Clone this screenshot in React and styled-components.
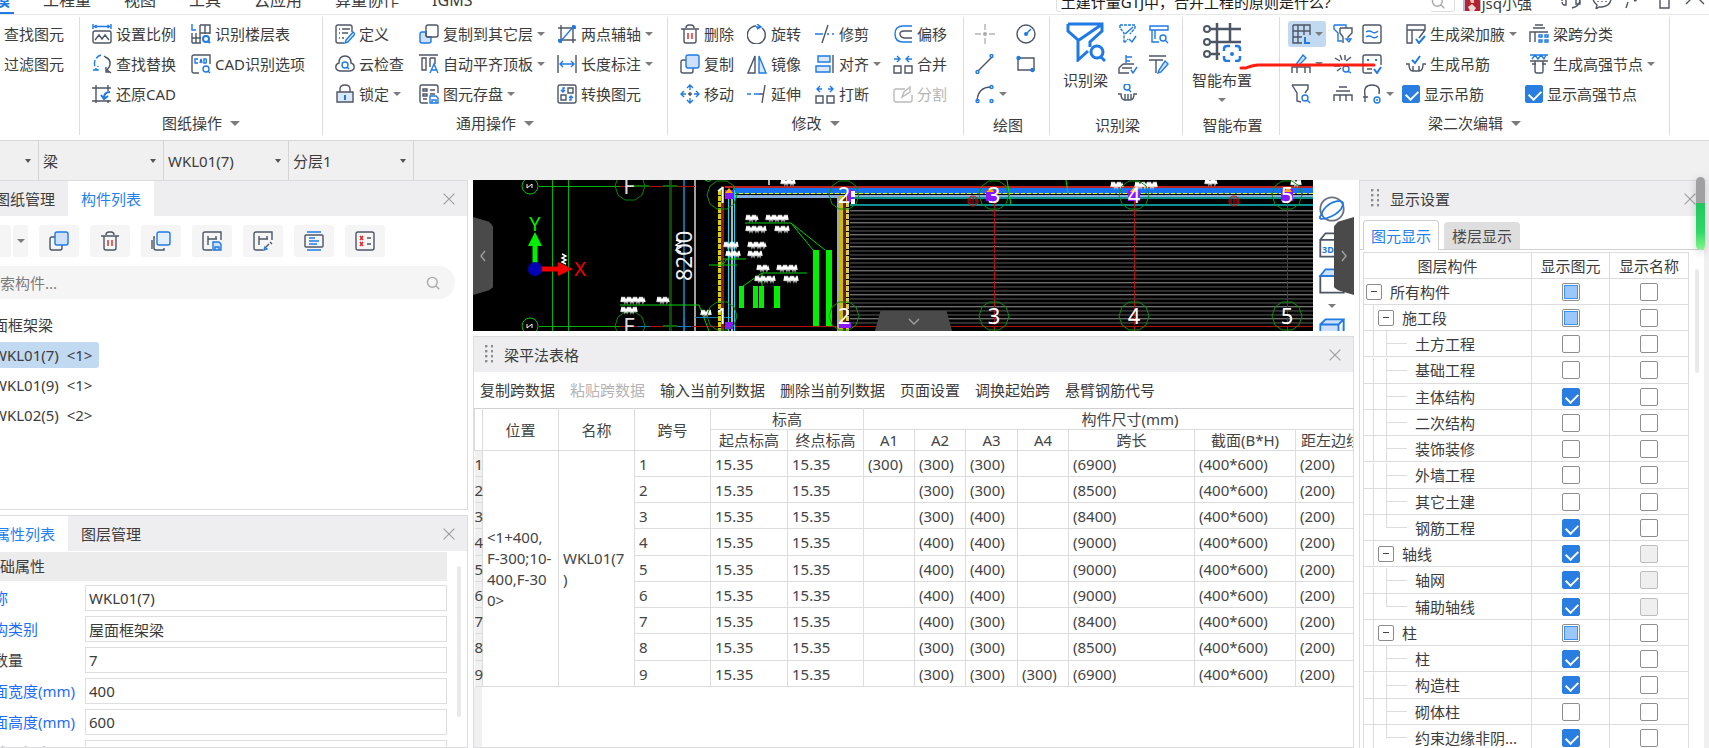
import React, { useEffect, useRef } from "react";
import styled, { createGlobalStyle, css } from "styled-components";

const BLUE = "#1f7ae6";
const INK = "#4d5566";
const LINE = "#dcdcde";

const Global = createGlobalStyle`
  * { box-sizing: border-box; }
  html, body { margin: 0; height: 100%; overflow: hidden; }
  body, button, input, select, table {
    font-family: "Noto Sans", "Noto Sans CJK SC", sans-serif;
    font-size: 15px;
    line-height: 20px;
    color: #3c3c3c;
  }
  button { border: 0; padding: 0; background: none; }
  body { background: #fff; }
`;

/* ---------- icons ---------- */

const k = (d, extra) => <path d={d} stroke={INK} {...extra} />;
const b = (d, extra) => <path d={d} stroke={BLUE} {...extra} />;

const ICONS = {
  scale: <>{b("M1 0v5M19 0v5M2 2.500h16M4.500 1l-2 1.500 2 1.500M15.500 1l2 1.500-2 1.500")}{k("M3 7h14q2 0 2 2v8q0 2-2 2H3q-2 0-2-2V9q0-2 2-2zM3 16l4-5 3 4 3-4 4 5")}</>,
  floors: <>{b("M1 0v6h4")}{k("M9 1h10v9M9 1v18M9 9h10M14 1v9M1 9v10M1 14h9M1 19h9M5 9v10")}{b("M19 19l-2-2M12 15a3 3 0 1 0 6 0 3 3 0 1 0-6 0", { strokeWidth: 2 })}</>,
  replace: <>{b("M9 1a9 9 0 0 0-4 15M1 16h5v-4", { strokeDasharray: "6 2" })}{k("M13 3q6 2 5 8-1 3-3 5l4 3M12 2l3 2M14 13v5h4")}</>,
  cadOpt: <>{k("M8 19H3q-2 0-2-2V3q0-2 2-2h16v9")}{b("M7 5H4v4h3M9 9l1-4 1 4M13 5v4h2q1-2 0-4zM19 19l-2-2M12 15a3 3 0 1 0 6 0 3 3 0 1 0-6 0")}</>,
  restore: <>{k("M4 1v18M16 1v6M16 16v3M0 4h19M0 17h19")}{b("M18 8q-6 0-6 6M9 11l3 4 4-3", { strokeWidth: 2 })}</>,
  define: <>{k("M17 8V3q0-2-2-2H3Q1 1 1 3v14q0 2 2 2h6M4 5h1M4 9h1M4 14h1M7 5h8M7 9h6M7 14h2")}{b("M18 8l2 2-7 8-3 1 1-3z", { fill: "#d5e6fc" })}</>,
  cloud: <>{k("M5 17q-5-1-4-5 0-2 3-3 0-7 6-7t6 7q3 1 3 3 1 4-4 5z")}{b("M7 11a3 3 0 1 0 6 0 3 3 0 1 0-6 0M12 13l2 2")}</>,
  lock: <>{k("M2 8h16v10H2z", { fill: "#dbe8fa" })}{k("M5 8V5q0-4 5-4t5 4v3")}{b("M10 11v5M9 12h2", { strokeWidth: 2 })}</>,
  copyFloor: <>{b("M7 8H3Q1 8 1 10v7q0 2 2 2h7q2 0 2-2v-4H9q-2 0-2-2z", { fill: "#cfe1fa" })}{k("M9 1h8q2 0 2 2v8q0 2-2 2H9q-2 0-2-2V3q0-2 2-2z")}</>,
  alignTop: <>{k("M0 1h19M3 4h4v12H3zM11 4h5v6M11 4v9")}{b("M11 19l4-9 4 9M12 16h6")}</>,
  store: <>{k("M9 19H3q-2 0-2-2V3q0-2 2-2h14q2 0 2 2v6M11 6h5M4 5h4v2H4zM4 10h4v2H4zM4 15h4M11 10h5")}{b("M11 12h6l2 2v5h-8zM13 19v-3h4v3")}</>,
  axis: <>{k("M4 1v18M16 1v18M1 4h18M1 16h18")}{b("M3 18L17 2")}<circle cx="17" cy="3" r="2" fill={BLUE} /><circle cx="3" cy="17" r="2" fill={BLUE} /></>,
  length: <>{k("M1 1v18M19 1v18")}{b("M3 10h14M6 7l-3 3 3 3M14 7l3 3-3 3")}</>,
  convert: <>{k("M3 1h14q2 0 2 2v14q0 2-2 2H3q-2 0-2-2V3q0-2 2-2zM11 4h5v5h-5zM4 11h5v5H4z")}{b("M8 4H6v4M4 6l2 2 2-2M12 16h2v-4M12 14l2-2 2 2")}</>,
  trash: <>{k("M1 5h18M4 5v12q0 2 2 2h8q2 0 2-2V5M6 4q0-3 3-3h2q3 0 3 3")}<path d="M8 9v6M12 9v6" stroke="#e02424" /></>,
  copy: <>{k("M6 6H3Q1 6 1 8v9q0 2 2 2h8q2 0 2-2v-3")}{b("M8 1h9q2 0 2 2v9q0 2-2 2H8q-2 0-2-2V3q0-2 2-2z", { fill: "#cfe1fa" })}</>,
  copyPlain: <>{k("M4 6H3v11q0 2 2 2h8v-2M1 9v9")}{b("M9 1h8q2 0 2 2v9q0 2-2 2H8q-2 0-2-2V3q0-2 2-2z", { fill: "#e3effe" })}</>,
  move: <>{b("M10 1v5M10 14v5M1 10h5M14 10h5M7 4l3-3 3 3M7 16l3 3 3-3M4 7l-3 3 3 3M16 7l3 3-3 3")}{k("M10 8v4M8 10h4")}</>,
  rotate: <>{k("M15 4a9 9 0 1 1-6-2")}{b("M10 0l4 3-4 2M13 3H9")}</>,
  mirror: <>{k("M8 2v17H1z")}{b("M12 2v17h7z", { fill: "#dbe8fa" })}</>,
  extend: <>{b("M0 10h4M7 10h5")}{k("M18 1l-3 18M12 10h4")}</>,
  trim: <>{b("M0 10h8M12 10h2M17 10h2")}{k("M13 1L7 19")}</>,
  align: <>{b("M3 2h12v6H3zM1 12h14v6H1z", { fill: "#dbe8fa" })}{k("M18 1v18")}</>,
  breakUp: <>{k("M1 12h7v7H1zM12 12h7v7h-7z")}{b("M2 5h5M13 5h5M5 2L2 5l3 3M15 2l3 3-3 3")}</>,
  offset: <>{b("M19 2h-9q-8 0-8 8t8 8h9")}{k("M19 7h-8q-4 0-4 3t4 4h8")}</>,
  merge: <>{k("M1 12h7v7H1zM12 12h7v7h-7z")}{b("M1 5h5M14 5h5M4 2l3 3-3 3M16 2l-3 3 3 3")}</>,
  split: <path d="M12 5H3Q1 5 1 7v9q0 2 2 2h14q2 0 2-2v-5M9 13l2-5 6-5v5z" stroke="#bbb" />,
  point: <><path d="M10 0v6M10 14v6M0 10h6M14 10h6" stroke="#b4b4b4" /><circle cx="10" cy="10" r="2" fill="#aaa" /></>,
  circle: <>{k("M1 10a9 9 0 1 0 18 0 9 9 0 1 0-18 0")}{b("M10 10l5-5")}<circle cx="10" cy="10" r="2" fill={BLUE} /></>,
  line: <>{k("M3 17L17 3")}{b("M1 18a1.500 1.500 0 1 0 3 0 1.500 1.500 0 1 0-3 0M15 2a1.500 1.500 0 1 0 3 0 1.500 1.500 0 1 0-3 0")}</>,
  rect: <>{k("M2 4h16v12H2z")}{b("M1 4a1.500 1.500 0 1 0 3 0 1.500 1.500 0 1 0-3 0M15 16a1.500 1.500 0 1 0 3 0 1.500 1.500 0 1 0-3 0", { fill: BLUE })}</>,
  arc: <>{k("M2 17Q3 3 16 3")}{b("M1 17a1.500 1.500 0 1 0 3 0 1.500 1.500 0 1 0-3 0M15 3a1.500 1.500 0 1 0 3 0 1.500 1.500 0 1 0-3 0M15 17a1.500 1.500 0 1 0 3 0 1.500 1.500 0 1 0-3 0")}</>,
  filterEdit: <>{b("M2 1h15v3l-5 6M2 1v3l4 5v10l4-4", { strokeDasharray: "3 1" })}{b("M11 15l3 3 4-6M15 3L7 10")}</>,
  spanSearch: <>{b("M1 2h18v4H1zM3 6v12h7M6 6v9M11 14a3 3 0 1 0 6 0 3 3 0 1 0-6 0M16 16l3 3")}</>,
  checkTray: <>{b("M8 1v8M8 3h6M8 7h4M13 16l2 3 4-6")}{k("M5 10h11M5 10l-4 4v5h10M4 14h10")}</>,
  beamEdit: <>{k("M0 2h17M0 6h14M7 6v13")}{b("M16 7l3 3-7 8-3 1 1-3z", { fill: "#d5e6fc" })}</>,
  basket: <>{b("M6 3a3 3 0 1 0 6 0 3 3 0 1 0-6 0M11 6l2 2")}{k("M0 10h3q0 6 4 6h5q4 0 4-6h3M7 10v6M10 10v6M13 10v6")}</>,
  gridL: <>{k("M2 1h17v10M2 1v18h9M2 7h17M2 13h9M7 1v18M13 1v10")}{b("M14 13v6h5", { strokeWidth: 2 })}</>,
  funnelPair: <>{b("M1 1h12v3M1 1v4l4 4v8h4M13 15h5l-2 3z")}{k("M7 4h12v5l-4 4v1M7 4v5l3 4v6")}</>,
  eqBox: <>{k("M3 1h14q2 0 2 2v14q0 2-2 2H3q-2 0-2-2V3q0-2 2-2z")}{b("M4 8q3-2 6 0t6-1M4 13q3-2 6 0t6-1")}</>,
  pencilBeam: <>{b("M12 1l3 3-7 7-3 1 1-3z", { fill: "#d5e6fc" })}{k("M1 19v-6h18v6M6 13v6M14 13v6")}</>,
  spark: <>{k("M2 4l5 3M7 1l2 5M12 1v5M18 3l-5 4M1 12h6M4 17l4-3")}{b("M10 15a3 3 0 1 0 6 0 3 3 0 1 0-6 0M15 17l3 2")}</>,
  robot: <>{k("M10 19H3q-2 0-2-2V3q0-2 2-2h14q2 0 2 2v8M5 15h5")}{b("M5 6h2M13 6h2M12 15l3 4 4-6", { strokeWidth: 2 })}</>,
  funnelFind: <>{k("M1 1h16v4l-3 4M1 1l5 8v8l4 1")}{b("M11 14a3 3 0 1 0 6 0 3 3 0 1 0-6 0M16 16l3 3")}</>,
  portal: <>{k("M6 3h8M3 7h14M1 17v-6h18v6M7 11v6M13 11v6")}</>,
  arch: <>{k("M3 18V11q-2-10 7-10t7 9M1 13h5")}{b("M12 16a3 3 0 1 0 6 0 3 3 0 1 0-6 0M14 16h2")}</>,
  haunch: <>{k("M1 1h18v5H1zM6 6v13H1V6M19 6l-6 8")}{b("M10 15l3 4 6-7", { strokeWidth: 2 })}</>,
  hanger: <>{b("M6 6l3 3 5-7", { strokeWidth: 2 })}{k("M0 10h3q0 7 4 7h6q4 0 4-7h3M7 12v5M13 12v5")}</>,
  classify: <>{k("M6 1h8M4 4h12M1 18V8h18M6 8v10")}{b("M10 11h3v2h-3zM16 11h3v2h-3zM10 16h3v2h-3zM16 16h3v2h-3z")}</>,
  node: <>{b("M1 1h18M3 5l3-4 3 4 3-4 3 4 2-4")}{k("M1 7h18M6 7v10q0 2 2 2h5q1 0 1-2V7M3 10h4M13 10h4")}</>,
  saveItem: <>{k("M10 19H3q-2 0-2-2V3q0-2 2-2h16v8M6 5v9M14 5v3M6 8h9")}{b("M11 11h6l2 2v6h-8zM13 19v-3h4v3", { fill: "#cfe1fa" })}</>,
  pickItem: <>{k("M10 19H3q-2 0-2-2V3q0-2 2-2h16v8M6 5v9M14 5v3M6 8h9M17 11l2 2M16 13l-3 3")}{b("M12 16l-1 3 3-1z")}</>,
  listItem: <>{b("M3 1h14M3 19h14")}{k("M2 4h16q1 0 1 1v10q0 1-1 1H2q-1 0-1-1V5q0-1 1-1z")}{b("M5 7h6M5 10h10M5 13h8")}</>,
  errItem: <>{k("M3 1h14q2 0 2 2v14q0 2-2 2H3q-2 0-2-2V3q0-2 2-2zM12 7h4M12 13h4")}<path d="M5 5l3 4M8 5L5 9M5 11l3 4M8 11l-3 4" stroke="#e02424" /></>,
  search: <path d="M2 9a7 7 0 1 0 14 0 7 7 0 1 0-14 0M14 14l5 5" stroke="#aaa" strokeWidth="2" />,
  close: <path d="M1 1l18 18M19 1L1 19" stroke="#a0a0a4" strokeWidth="2" />,
  headset: <path d="M1 12v-2q0-9 9-9t9 9q0 7-8 9M1 9h4v7H3q-2-1-2-3M15 9h4v6h-4z" stroke={INK} />,
  chat: <path d="M7 18l-3 2 1-4q-4-3-4-7 0-8 9-8t9 8-9 9zM6 12v1M10 12v1M14 12v1" stroke={INK} />,
  help: <path d="M2 8l5-4 5 8 5-4M5 13l-2 6" stroke={INK} />,
  shirt: <path d="M6 1L1 6l3 4 2-1v10h9V9l2 1 3-4-5-5-3 2H9z" stroke={INK} />,
  up: <path d="M1 15l9-9 9 9" stroke={INK} />,
  orbit: <><circle cx="10" cy="10" r="9" stroke="#6a7180" /><path d="M2 14q-4 5 4 3 7-2 11-7 4-7-3-6-6 1-10 6-3 4-1 5" stroke={BLUE} /></>,
  cube3d: <>{k("M1 6h12v13H1zM1 6l4-5h14M13 6l5-5")}</>,
  cubeTop: <>{k("M1 6h18v13H1z")}{b("M1 6l4-5h14v5z", { fill: "#cfe1fa" })}</>,
  cubeFull: <>{b("M1 5h14v14H1zM1 5l4-4h14l-4 4M19 1v16l-4 2", { fill: "#cfe1fa" })}</>,
};

const Svg = styled.svg`
  flex: none;
  display: block;
  width: ${(p) => p.$size || 20}px;
  height: ${(p) => p.$size || 20}px;
  fill: none;
  stroke-width: 1.4;
`;
const Icon = ({ name, size }) => (
  <Svg viewBox="0 0 20 20" $size={size} aria-hidden="true">{ICONS[name]}</Svg>
);

const Caret = styled.span`
  flex: none;
  width: 0;
  height: 0;
  border: ${(p) => (p.$big ? 5 : 4)}px solid transparent;
  border-top-color: #7c7c7c;
  border-bottom: 0;
`;

/* ---------- title bar ---------- */

const TopBar = styled.header`
  flex: none;
  height: 15px;
  display: flex;
  align-items: flex-end;
  justify-content: space-between;
  overflow: hidden;
  border-bottom: 1px solid #e6e6e8;
`;
const Menu = styled.nav`
  display: flex;
  gap: 33px;
  margin-left: -22px;
`;
const MenuLink = styled.a`
  position: relative;
  padding-bottom: 4px;
  font-size: 16px;
  white-space: nowrap;
  text-decoration: none;
  color: ${(p) => (p.$active ? BLUE : "#3c3c3c")};
  font-weight: ${(p) => (p.$active ? 700 : 400)};
  ${(p) => p.$active && css`
    &::after { content: ""; position: absolute; left: 0; right: -4px; bottom: 0; height: 2px; background: ${BLUE}; }
  `}
`;
const TopTools = styled.div`
  display: flex;
  align-items: flex-end;
  padding-right: 4px;
`;
const AskBox = styled.label`
  display: flex;
  align-items: center;
  width: 399px;
  height: 30px;
  margin: 0 8px 2px 0;
  padding: 0 9px 0 4px;
  border: 1px solid #dedee0;
  border-radius: 3px;
  input { flex: 1; min-width: 0; border: 0; padding: 10px 0 0; outline: 0; color: #1c1c1c; }
  svg { margin-top: 10px; }
`;
const Avatar = styled.svg`
  width: 18px;
  height: 18px;
  margin: 0 1px 3px 0;
`;
const UserName = styled.span`
  padding-bottom: 1px;
  margin-right: 29px;
`;
const TopIcons = styled.div`
  display: flex;
  gap: 11px;
  padding-bottom: 5px;
`;

/* ---------- ribbon ---------- */

const Ribbon = styled.div`
  flex: none;
  display: flex;
  padding: 2px 0 5px;
  border-bottom: 1px solid #d8d8da;
`;
const GroupBox = styled.section`
  flex: none;
  width: ${(p) => p.$w}px;
  height: 118px;
  padding-top: 2px;
  border-right: 1px solid ${LINE};
`;
const GroupBody = styled.div`
  display: flex;
  height: 90px;
  padding-left: ${(p) => p.$pad}px;
`;
const ToolGrid = styled.div`
  display: grid;
  grid-template-rows: repeat(3, 30px);
  grid-template-columns: ${(p) => p.$cols};
  align-items: center;
`;
const GroupTitle = styled.div`
  display: flex;
  align-items: center;
  justify-content: center;
  gap: 8px;
  height: 26px;
  padding-top: ${(p) => (p.$low ? 6 : 2)}px;
  padding-left: ${(p) => (p.$low ? 3 : 0)}px;
`;
const ToolButton = styled.button`
  display: flex;
  align-items: center;
  justify-self: start;
  gap: 4px;
  height: 24px;
  white-space: nowrap;
  margin-left: ${(p) => (p.$inset ? 4 : 0)}px;
  color: ${(p) => (p.$off ? "#b4b4b4" : "#3c3c3c")};
`;
const MiniButton = styled.button`
  display: flex;
  align-items: center;
  justify-self: start;
  gap: 4px;
  height: 26px;
  padding: 0 3px;
  margin-left: -3px;
  border-radius: 3px;
  background: ${(p) => (p.$on ? "#c2d9f2" : "none")};
`;
const BigButton = styled.button`
  display: flex;
  flex-direction: column;
  align-items: center;
  gap: 8px;
  width: ${(p) => p.$w}px;
  padding-top: 3px;
  margin-right: 10px;
  white-space: nowrap;
`;
const CheckLabel = styled.label`
  display: flex;
  align-items: center;
  gap: 4px;
  white-space: nowrap;
`;

const Group = ({ w, pad, title, plain, children }) => (
  <GroupBox $w={w}>
    <GroupBody $pad={pad}>{children}</GroupBody>
    {title && <GroupTitle $low={plain}>{title}{!plain && <Caret $big />}</GroupTitle>}
  </GroupBox>
);
const Tool = ({ icon, text, menu, off, inset }) => (
  <ToolButton type="button" disabled={off} $off={off} $inset={inset}>
    {icon && <Icon name={icon} />}{text}{menu && <Caret />}
  </ToolButton>
);
const Mini = ({ icon, label, menu, on }) => (
  <MiniButton type="button" aria-label={label} $on={on}>
    <Icon name={icon} />{menu && <Caret />}
  </MiniButton>
);

const Tick = styled.input.attrs({ type: "checkbox" })`
  appearance: none;
  flex: none;
  position: relative;
  display: block;
  width: 18px;
  height: 18px;
  margin: 0;
  border: 1px solid #8e8e8e;
  border-radius: 2px;
  background: #fff;
  &:checked { background: #2a7de1; border-color: #2a7de1; }
  &:checked::before {
    content: "";
    position: absolute;
    left: 5px;
    top: 2px;
    width: 6px;
    height: 10px;
    border: solid #fff;
    border-width: 0 2px 2px 0;
    transform: rotate(45deg);
  }
  &:indeterminate::before {
    content: "";
    position: absolute;
    inset: 1px;
    border: 1px solid #3f92f5;
    background: #9cc7fb;
  }
  &:disabled { background: #efefef; border-color: #bdbdbd; }
`;
const Check = ({ state, ...rest }) => {
  const ref = useRef(null);
  useEffect(() => { ref.current.indeterminate = state === "mixed"; }, [state]);
  return <Tick ref={ref} defaultChecked={state === "on"} disabled={state === "off"} {...rest} />;
};

/* ---------- filter bar ---------- */

const FilterBar = styled.div`
  flex: none;
  display: flex;
  height: 39px;
  background: #f0f0f0;
`;
const FilterBox = styled.label`
  position: relative;
  width: ${(p) => p.$w}px;
  border-right: 1px solid #d4d4d6;
  select {
    appearance: none;
    width: 100%;
    height: 100%;
    padding: 0 20px 0 4px;
    border: 0;
    background: transparent;
  }
  ${Caret} { position: absolute; right: 7px; top: 18px; border-width: 4px 3px 0; border-top-color: #555; }
`;

/* ---------- panels ---------- */

const Main = styled.main`
  flex: 1;
  min-height: 0;
  display: flex;
  gap: 5px;
`;
const LeftColumn = styled.div`
  flex: none;
  width: 491px;
  margin-left: -23px;
  display: flex;
  flex-direction: column;
  gap: 5px;
`;
const Panel = styled.section`
  display: flex;
  flex-direction: column;
  min-height: 0;
  height: ${(p) => (p.$h ? p.$h + "px" : "auto")};
  flex: ${(p) => (p.$h ? "none" : "1")};
  border: 1px solid ${LINE};
  overflow: hidden;
`;
const PanelHead = styled.div`
  flex: none;
  display: flex;
  align-items: center;
  height: 35px;
  padding-right: ${(p) => p.$right || 12}px;
  background: #eeeef0;
`;
const PanelTab = styled.button`
  height: 35px;
  padding: 0 13px;
  color: ${(p) => (p.$active ? "#1f80f0" : "#3c3c3c")};
  background: ${(p) => (p.$active ? "#fff" : "none")};
  &:first-child { margin-left: 4px; }
`;
const CloseButton = styled.button`
  margin-left: auto;
`;
const Grip = styled.span`
  width: 8px;
  height: 20px;
  margin: 0 11px 0 11px;
  background: radial-gradient(circle at 1px 1px, #8c8c90 1px, transparent 2px) 0 0 / 6px 5px;
`;
const ListTools = styled.div`
  display: flex;
  gap: 11px;
  padding: 9px 0 9px 3px;
`;
const SquareButton = styled.button`
  display: grid;
  place-items: center;
  width: ${(p) => (p.$slim ? 15 : 40)}px;
  height: 32px;
  border-radius: 3px;
  background: #f5f5f5;
`;
const SplitButton = styled.div`
  display: flex;
  gap: 2px;
  margin-left: -10px;
`;
const SearchBox = styled.label`
  display: flex;
  align-items: center;
  height: 33px;
  margin-right: 12px;
  padding: 0 15px 0 7px;
  border-radius: 0 17px 17px 0;
  background: #f5f5f5;
  input { flex: 1; border: 0; padding: 0; outline: 0; background: none; }
  input::placeholder { color: #7c7c7c; opacity: 1; }
`;
const ItemList = styled.ul`
  list-style: none;
  margin: 0;
  padding: 13px 0 0;
`;
const Item = styled.li`
  width: fit-content;
  height: 26px;
  margin-bottom: 4px;
  padding: 3px 7px 3px ${(p) => (p.$top ? 0 : 15)}px;
  border-radius: 3px;
  white-space: pre;
  background: ${(p) => (p.$on ? "#c2d9f2" : "none")};
`;
const PropBody = styled.div`
  display: flex;
  padding-top: 1px;
`;
const PropForm = styled.form`
  flex: 1;
`;
const PropSection = styled.div`
  height: 29px;
  margin-bottom: 4px;
  padding: 4px 7px;
  background: #ececec;
`;
const PropRow = styled.label`
  display: flex;
  align-items: center;
  height: 26px;
  margin-bottom: 5px;
  color: ${(p) => (p.$tone === "blue" ? "#1a6dff" : p.$tone === "grey" ? "#8a8a8a" : "#3c3c3c")};
  span { width: 107px; flex: none; white-space: nowrap; }
  input { flex: 1; height: 26px; border: 1px solid #dededf; padding: 0 3px; outline: 0; }
`;
const Thumb = styled.div`
  flex: none;
  width: 4px;
  height: ${(p) => p.$h}px;
  margin: ${(p) => p.$top}px ${(p) => p.$right}px 0 ${(p) => p.$left}px;
  border-radius: 2px;
  background: #e9e9ea;
`;

/* ---------- drawing view ---------- */

const Center = styled.div`
  flex: 1;
  min-width: 0;
  display: flex;
  flex-direction: column;
  gap: 5px;
`;
const View = styled.div`
  position: relative;
  flex: none;
  display: flex;
  height: 151px;
`;
const Canvas = styled.svg`
  flex: 1;
  min-width: 0;
  height: 151px;
  background: #000;
  font-family: "Noto Sans", sans-serif;
`;
const ViewTools = styled.div`
  display: flex;
  flex-direction: column;
  align-items: center;
  gap: 10px;
  width: 41px;
  padding: 16px 3px 0 0;
  overflow: hidden;
  button { flex: none; position: relative; }
  b { position: absolute; left: 3px; bottom: 2px; font-size: 9px; line-height: 12px; color: ${BLUE}; }
`;
const Handle = styled.button`
  position: absolute;
  display: grid;
  place-items: center;
  background: #4a4a4a;
  ${(p) => p.$side === "left" && css`left: 0; top: 37px; width: 20px; height: 78px; clip-path: polygon(0 0, 80% 6%, 100% 12%, 100% 90%, 80% 94%, 0 100%);`}
  ${(p) => p.$side === "right" && css`right: 0; top: 37px; width: 20px; height: 78px; clip-path: polygon(100% 0, 20% 6%, 0 12%, 0 90%, 20% 94%, 100% 100%);`}
  ${(p) => p.$side === "bottom" && css`left: 402px; bottom: 0; width: 77px; height: 20px; clip-path: polygon(7% 0, 93% 0, 100% 100%, 0 100%);`}
`;

const AXES = [["1", 249], ["2", 371], ["3", 521], ["4", 661], ["5", 814]];
const NOTES = [
  [273, 38, 12], [293, 38, 22], [273, 49, 20], [302, 49, 13], [251, 65, 13], [275, 65, 18],
  [253, 74, 13], [275, 74, 13], [284, 88, 12], [304, 88, 20], [282, 99, 19], [311, 99, 13],
  [148, 120, 24], [184, 120, 12], [148, 130, 15], [228, 133, 10], [308, 2, 13], [638, 5, 12], [662, 5, 22], [732, 2, 11], [818, 3, 10],
];
const hatch = Array.from({ length: 29 }, (_, i) => 30 + i * 4);
const polygon = (cx, cy, r) =>
  Array.from({ length: 10 }, (_, i) => {
    const a = (i * Math.PI) / 5;
    return `${Math.round(cx + r * Math.cos(a))},${Math.round(cy + r * Math.sin(a))}`;
  }).join(" ");
const scribble = (x, y, w) => {
  let d = `M${x} ${y + 2}`;
  for (let i = 0; i < w; i += 2) d += `l1 ${i % 6 === 4 ? -3 : -5}l1 ${i % 6 === 4 ? 3 : 5}`;
  return d;
};

const Drawing = () => (
  <Canvas viewBox="0 0 840 151" preserveAspectRatio="xMinYMin slice" fill="none" role="img" aria-label="CAD">
    <g shapeRendering="crispEdges">
      {hatch.map((y, i) => <path key={y} d={`M377 ${y}H840`} stroke={i % 3 ? "#333" : "#6e6e6e"} />)}
      {hatch.map((y) => <path key={y} d={`M377 ${y + 1}H840`} stroke="#2a2a2a" />)}
      <path d="M79 0V151M95 0V151" stroke="#00b400" />
      <path d="M197 0V151" stroke="#0a4a0a" strokeWidth="3" />
      <path d="M211 0V151" stroke="#0f6f9c" strokeWidth="2" />
      <path d="M222 0V151" stroke="#a0a0a0" strokeWidth="2" />
      <path d="M66 6H147M66 146H147" stroke="#00b400" />
      <path d="M147 6H222M147 146H840" stroke="#b01010" />
      <path d="M160 6h16M190 6h14M190 146h14" stroke="#0a6a0a" strokeWidth="2" />
      <path d="M165 146h12M204 146h14M222 137h36M211 137v14" stroke="#0f7fc0" />
    </g>
    <circle cx="57" cy="6" r="8" stroke="#00c400" /><circle cx="57" cy="146" r="8" stroke="#00c400" />
    <polygon points={polygon(157, 6, 15)} stroke="#0a800a" /><polygon points={polygon(157, 146, 15)} stroke="#0a800a" />
    <path d="M54 4v4l5-4v4M54 144v4l5-4v4" stroke="#fff" />
    <text x="156" y="14" fill="#ddd" fontSize="22" textAnchor="middle">F</text>
    <text x="156" y="154" fill="#ddd" fontSize="22" textAnchor="middle">F</text>

    <g shapeRendering="crispEdges">
      <path d="M252 7H840" stroke="#c02020" strokeWidth="2" /><path d="M260 8H840" stroke="#e0a020" strokeDasharray="4 3" />
      <path d="M260 11H840" stroke="#1774f0" strokeWidth="6" />
      <path d="M260 16H840" stroke="#86aede" strokeWidth="3" />
      <path d="M260 13H840" stroke="#f0f000" strokeDasharray="4 2" />
      <path d="M371 18H840M377 25H840" stroke="#0a9090" strokeWidth="2" />
      <path d="M246 10V151" stroke="#d8d000" strokeWidth="3" strokeDasharray="5 1" />
      <path d="M249 6V151" stroke="#901818" strokeWidth="3" />
      <path d="M255 10V151" stroke="#00e0ff" strokeWidth="1" /><path d="M259 10V151" stroke="#b4b4b4" strokeWidth="2" /><path d="M261 10V151" stroke="#00e0ff" strokeWidth="1" />
      <path d="M365 16V151" stroke="#a8a8a0" strokeWidth="3" /><path d="M368 16V151" stroke="#c8c000" strokeWidth="3" />
      <path d="M371 16V151" stroke="#701818" strokeWidth="3" /><path d="M374 16V151" stroke="#d8d040" strokeWidth="3" strokeDasharray="5 1" />
      <path d="M521 20V151M661 20V151M814 20V151" stroke="#b81010" strokeDasharray="8 1" />
    </g>
    <path d="M534 0l4 25M593 0l2 13M232 0q4 3 6 0" stroke="#00e000" />
    <circle cx="500" cy="21" r="5" stroke="#d01010" /><path d="M497 18v6M500 17v8M503 18v6" stroke="#d01010" />
    <circle cx="761" cy="21" r="5" stroke="#d01010" /><path d="M758 18v6M761 17v8M764 18v6" stroke="#d01010" />

    <path d="M340 70h6v76h-6zM353 70h6v76h-6zM266 106h5v22h-5zM280 106h5v22h-5zM286 106h5v22h-5zM301 106h6v22h-6z" fill="#00f000" />
    <path d="M272 43H318L340 70M318 43L352 70M334 93H289L270 106M289 93v13M147 125H226L236 151M236 85h28M250 79h23M246 79l4 5 4-5" stroke="#00d000" />
    <g stroke="#fff" strokeWidth="1.400">
      {NOTES.map(([x, y, w]) => <path key={x + "-" + y} d={scribble(x, y, w)} />)}
      <path d="M89 74l4 2-4 2 4 2-4 2 4 2M296 0v5M203 60l5 2-5 3 5 2-5 3 5 2" />
    </g>

    <g fill="#8a18ff">
      <rect x="252" y="10" width="9" height="9" /><rect x="374" y="10" width="7" height="12" /><rect x="513" y="10" width="12" height="11" />
      <rect x="655" y="10" width="12" height="11" /><rect x="808" y="9" width="12" height="12" /><rect x="252" y="142" width="8" height="7" /><rect x="366" y="142" width="12" height="6" />
    </g>
    <path d="M252 13l4-5 4 5zM513 12l5-5 3 5zM657 12l4-5 4 5zM811 12l4-5 4 5z" fill="#ffb000" />
    <path d="M378 11h4v6h-4zM378 19h4v5h-4z" fill="#fff" />
    {AXES.map(([n, x]) => (
      <g key={n}>
        <polygon points={polygon(x, 15, 15)} stroke="#0a900a" /><polygon points={polygon(x, 136, 15)} stroke="#0a900a" />
        <text x={x} y="23" fill="#fff" fontSize="22" textAnchor="middle">{n}</text>
        <text x={x} y="144" fill="#fff" fontSize="22" textAnchor="middle">{n}</text>
      </g>
    ))}
    <text transform="translate(219 101) rotate(-90)" fill="#f2f2f2" fontSize="22">8200</text>

    <path d="M62 84V62" stroke="#00f000" strokeWidth="5" /><path d="M55 66l7-14 7 14z" fill="#00f000" />
    <path d="M68 89h20" stroke="#f00000" strokeWidth="5" /><path d="M85 82l15 7-15 7z" fill="#f00000" />
    <circle cx="62" cy="89" r="7" fill="#0000b4" />
    <text x="62" y="51" fill="#00f000" fontSize="20" textAnchor="middle">Y</text>
    <text x="107" y="96" fill="#f00000" fontSize="20" textAnchor="middle">X</text>
  </Canvas>
);

const Arrow = ({ d }) => (
  <svg width="14" height="14" viewBox="0 0 14 14" fill="none" stroke="#a0a0a0" strokeWidth="1.400" aria-hidden="true"><path d={d} /></svg>
);

/* ---------- span table ---------- */

const SpanTools = styled.div`
  flex: none;
  display: flex;
  gap: 15px;
  height: 36px;
  padding-left: 6px;
  white-space: nowrap;
  button:disabled { color: #b4b4b4; }
`;
const SpanScroll = styled.div`
  flex: 1;
  min-height: 0;
  overflow: hidden;
  background: linear-gradient(to right, #f0f0f0 8px, #fff 8px);
`;
const SpanTable = styled.table`
  table-layout: fixed;
  width: 922px;
  border-collapse: collapse;
  background: #fff;
  th, td { border: 1px solid ${LINE}; padding: 0 4px; white-space: nowrap; overflow: hidden; }
  th, td { color: #444; }
  thead th { font-weight: 400; height: 21px; padding: 0; border-top-color: #d0d0d2; }
  tbody tr { height: 26px; }
  tbody tr:nth-child(4n) { height: 27px; }
  tbody th { padding: 0; font-weight: 400; text-align: left; background: #f0f0f0; overflow: visible; border-left: 0; }
  td.merged { white-space: pre-line; line-height: 21px; word-break: break-all; }
`;
const SPANS = [
  ["(300)", "(300)", "(300)", "", "(6900)"],
  ["", "(300)", "(300)", "", "(8500)"],
  ["", "(300)", "(400)", "", "(8400)"],
  ["", "(400)", "(400)", "", "(9000)"],
  ["", "(400)", "(400)", "", "(9000)"],
  ["", "(400)", "(400)", "", "(9000)"],
  ["", "(400)", "(300)", "", "(8400)"],
  ["", "(300)", "(300)", "", "(8500)"],
  ["", "(300)", "(300)", "(300)", "(6900)"],
];
const SPAN_COLS = [8, 76, 76, 76, 77, 76, 51, 51, 52, 51, 126, 101, 101];

/* ---------- display settings ---------- */

const RightPanel = styled(Panel)`
  flex: none;
  width: 350px;
  border-width: 1px 5px 0 1px;
  border-right-color: #f0f0f0;
`;
const SubTabs = styled.div`
  flex: none;
  display: flex;
  align-items: flex-end;
  gap: 5px;
  height: 34px;
  padding-left: 3px;
  border-bottom: 1px solid #cfcfd2;
`;
const SubTab = styled.button`
  width: 76px;
  height: ${(p) => (p.$active ? 30 : 27)}px;
  border-radius: 4px 4px 0 0;
  ${(p) => p.$active
    ? css`color: #1f80f0; background: #fff; border: 1px solid #cfcfd2; border-bottom: 0; margin-bottom: -1px;`
    : css`background: #dedede; color: #4a4a4a;`}
`;
const TreeWrap = styled.div`
  display: flex;
  padding: 2px 0 0 3px;
`;
const TreeTable = styled.table`
  flex: none;
  table-layout: fixed;
  width: 325px;
  border-collapse: collapse;
  th, td { border: 1px solid ${LINE}; padding: 0; height: 26px; }
  th { font-weight: 400; }
  tbody tr:nth-child(4n) td { height: 27px; }
  td ${Tick} { margin: 0 auto; }
`;
const guide = {
  0: css`padding-left: 2px;`,
  1: css`padding-left: 14px; background: linear-gradient(${LINE}, ${LINE}) 9px 0 / 1px 100% no-repeat;`,
  2: css`
    padding-left: 51px;
    background:
      linear-gradient(${LINE}, ${LINE}) 9px 0 / 1px 100% no-repeat,
      linear-gradient(${LINE}, ${LINE}) 22px 0 / 1px ${(p) => (p.$last ? 50 : 100)}% no-repeat,
      linear-gradient(${LINE}, ${LINE}) 22px 50% / 21px 1px no-repeat;
  `,
};
const NameCell = styled.div`
  display: flex;
  align-items: center;
  gap: 8px;
  height: 25px;
  white-space: nowrap;
  ${(p) => guide[p.$level]}
`;
const Fold = styled.button`
  width: 16px;
  height: 16px;
  display: grid;
  place-items: center;
  border: 1px solid #8c8c8c;
  border-radius: 2px;
  background: #fff;
  &::before { content: ""; width: 6px; height: 1px; background: #444; }
`;
const TREE = [
  [0, "所有构件", "mixed"], [1, "施工段", "mixed"], [2, "土方工程"], [2, "基础工程"], [2, "主体结构", "on"],
  [2, "二次结构"], [2, "装饰装修"], [2, "外墙工程"], [2, "其它土建"], [2, "钢筋工程", "on"],
  [1, "轴线", "on", "off"], [2, "轴网", "on", "off"], [2, "辅助轴线", "on", "off"],
  [1, "柱", "mixed"], [2, "柱", "on"], [2, "构造柱", "on"], [2, "砌体柱"], [2, "约束边缘非阴...", "on"],
];

/* ---------- overlays ---------- */

const Shell = styled.div`
  position: relative;
  display: flex;
  flex-direction: column;
  height: 100vh;
  overflow: hidden;
`;
const RedMark = styled.svg`
  position: absolute;
  left: 1238px;
  top: 58px;
  width: 140px;
  height: 16px;
  pointer-events: none;
`;
const Meter = styled.div`
  position: absolute;
  right: 4px;
  top: 177px;
  width: 9px;
  height: 73px;
  border-radius: 5px;
  background: linear-gradient(#a0a0a2 36%, #22c55e 36%, #2fd868 75%, #86f58a);
  box-shadow: 0 2px 8px rgba(0, 0, 0, 0.18);
`;

const LIST_ICONS = [["copy", "复制"], ["trash", "删除"], ["copyPlain", "层间复制"], ["saveItem", "存档"], ["pickItem", "提取"], ["listItem", "添加"], ["errItem", "检查"]];
const PROPS = [
  ["名称", "WKL01(7)", "blue"], ["结构类别", "屋面框架梁", "blue"], ["跨数量", "7"],
  ["截面宽度(mm)", "400", "blue"], ["截面高度(mm)", "600", "blue"], ["轴线距梁左...", "", "grey"],
];

const Close = () => <CloseButton type="button" aria-label="关闭"><Icon name="close" size={12} /></CloseButton>;

export default function App() {
  return (
    <Shell>
      <Global />
      <TopBar>
        <Menu>
          {["建模", "工程量", "视图", "工具", "云应用", "算量协作", "IGMS"].map((t, i) => (
            <MenuLink key={t} href="#" $active={i === 0}>{t}</MenuLink>
          ))}
        </Menu>
        <TopTools>
          <AskBox>
            <input aria-label="搜索" defaultValue="土建计量GTJ中，合并工程的原则是什么?" />
            <Icon name="search" size={14} />
          </AskBox>
          <Avatar viewBox="0 0 18 18" aria-hidden="true">
            <rect width="18" height="18" fill="#b9b5dd" />
            <path d="M2 18V6l4-6h7l4 8v10z" fill="#b5232c" /><path d="M6 4h5v6H8z" fill="#f1c7b5" /><path d="M5 14l4-3 4 4-2 3H7z" fill="#f0dada" />
          </Avatar>
          <UserName>jsq小强</UserName>
          <TopIcons>{["headset", "chat", "help", "shirt", "up"].map((n) => <Icon key={n} name={n} />)}</TopIcons>
        </TopTools>
      </TopBar>

      <Ribbon>
        <Group w={80} pad={4}>
          <ToolGrid $cols="auto"><Tool text="查找图元" /><Tool text="过滤图元" /></ToolGrid>
        </Group>
        <Group w={243} pad={12} title="图纸操作">
          <ToolGrid $cols="99px auto">
            <Tool icon="scale" text="设置比例" /><Tool icon="floors" text="识别楼层表" />
            <Tool icon="replace" text="查找替换" /><Tool icon="cadOpt" text="CAD识别选项" />
            <Tool icon="restore" text="还原CAD" />
          </ToolGrid>
        </Group>
        <Group w={345} pad={12} title="通用操作">
          <ToolGrid $cols="84px 138px auto">
            <Tool icon="define" text="定义" /><Tool icon="copyFloor" text="复制到其它层" menu /><Tool icon="axis" text="两点辅轴" menu />
            <Tool icon="cloud" text="云检查" /><Tool icon="alignTop" text="自动平齐顶板" menu /><Tool icon="length" text="长度标注" menu />
            <Tool icon="lock" text="锁定" menu /><Tool icon="store" text="图元存盘" menu /><Tool icon="convert" text="转换图元" />
          </ToolGrid>
        </Group>
        <Group w={296} pad={12} title="修改">
          <ToolGrid $cols="67px 68px 78px auto">
            <Tool icon="trash" text="删除" /><Tool icon="rotate" text="旋转" /><Tool icon="trim" text="修剪" /><Tool icon="offset" text="偏移" />
            <Tool icon="copy" text="复制" /><Tool icon="mirror" text="镜像" /><Tool icon="align" text="对齐" menu /><Tool icon="merge" text="合并" />
            <Tool icon="move" text="移动" /><Tool icon="extend" text="延伸" /><Tool icon="breakUp" text="打断" /><Tool icon="split" text="分割" off />
          </ToolGrid>
        </Group>
        <Group w={86} pad={11} title="绘图" plain>
          <ToolGrid $cols="41px auto">
            <Mini icon="point" label="点" /><Mini icon="circle" label="圆" />
            <Mini icon="line" label="直线" /><Mini icon="rect" label="矩形" />
            <Mini icon="arc" label="弧线" menu />
          </ToolGrid>
        </Group>
        <Group w={133} pad={13} title="识别梁" plain>
          <BigButton type="button" $w={45}>
            <Svg $size={40} viewBox="0 0 40 40" aria-hidden="true">
              <path d="M2 2h34v7L24 20v5M2 2v7l10 9v20l10-9M35 3L13 18" stroke={BLUE} strokeWidth="3" />
              <circle cx="31" cy="30" r="6" stroke={BLUE} strokeWidth="3" /><path d="M35 35l4 4" stroke={BLUE} strokeWidth="3" />
            </Svg>
            识别梁
          </BigButton>
          <ToolGrid $cols="31px auto">
            <Mini icon="filterEdit" label="校核" /><Mini icon="spanSearch" label="查找" />
            <Mini icon="checkTray" label="检查" /><Mini icon="beamEdit" label="编辑" />
            <Mini icon="basket" label="识别吊筋" />
          </ToolGrid>
        </Group>
        <Group w={97} pad={9} title="智能布置" plain>
          <BigButton type="button" $w={60}>
            <Svg $size={40} viewBox="0 0 40 40" aria-hidden="true">
              <path d="M8 7h31M8 20h31M8 32h10M15 1v37M28 1v18" stroke={INK} strokeWidth="2.500" />
              <g stroke={INK} strokeWidth="2"><circle cx="5" cy="7" r="3" /><circle cx="5" cy="20" r="3" /><circle cx="5" cy="32" r="3" /></g>
              <path d="M28 24h-3q-3 0-3 3v2M33 24h2q3 0 3 3v2M28 39h-3q-3 0-3-3v-2M33 39h2q3 0 3-3v-2" stroke={BLUE} strokeWidth="2.500" /><circle cx="30" cy="32" r="2" fill={BLUE} />
            </Svg>
            智能布置
            <Caret />
          </BigButton>
        </Group>
        <Group w={390} pad={11} title="梁二次编辑">
          <ToolGrid $cols="42px 29px 40px 123px auto">
            <Mini icon="gridL" label="原位标注" menu on /><Mini icon="funnelPair" label="过滤" /><Mini icon="eqBox" label="应用同名梁" />
            <Tool icon="haunch" text="生成梁加腋" menu inset /><Tool icon="classify" text="梁跨分类" inset />
            <Mini icon="pencilBeam" label="编辑支座" menu /><Mini icon="spark" label="打断梁" /><Mini icon="robot" label="校核" />
            <Tool icon="hanger" text="生成吊筋" inset /><Tool icon="node" text="生成高强节点" menu inset />
            <Mini icon="funnelFind" label="查找" /><Mini icon="portal" label="梁跨" /><Mini icon="arch" label="拱梁" menu />
            <CheckLabel><Check state="on" />显示吊筋</CheckLabel><CheckLabel><Check state="on" />显示高强节点</CheckLabel>
          </ToolGrid>
        </Group>
      </Ribbon>

      <FilterBar>
        {[["", 39], ["梁", 125], ["WKL01(7)", 125], ["分层1", 125]].map(([t, w]) => (
          <FilterBox key={w + t} $w={w}>
            <select aria-label={t || "楼层"} defaultValue={t}><option value={t}>{t}</option></select>
            <Caret />
          </FilterBox>
        ))}
      </FilterBar>

      <Main>
        <LeftColumn>
          <Panel $h={330}>
            <PanelHead>
              <PanelTab type="button">图纸管理</PanelTab><PanelTab type="button" $active>构件列表</PanelTab><Close />
            </PanelHead>
            <ListTools>
              <SplitButton>
                <SquareButton type="button" aria-label="新建">
                  <Svg $size={20} viewBox="0 0 20 20" aria-hidden="true">{k("M3 3h12q2 0 2 2v12q0 2-2 2H3")}</Svg>
                </SquareButton>
                <SquareButton type="button" $slim aria-label="更多"><Caret /></SquareButton>
              </SplitButton>
              {LIST_ICONS.map(([n, l]) => <SquareButton key={n} type="button" aria-label={l}><Icon name={n} /></SquareButton>)}
            </ListTools>
            <SearchBox><input placeholder="搜索构件..." aria-label="搜索构件" /><Icon name="search" size={14} /></SearchBox>
            <ItemList>
              <Item $top>屋面框架梁</Item>
              <Item $on>WKL01(7)  &lt;1&gt;</Item>
              <Item>WKL01(9)  &lt;1&gt;</Item>
              <Item>WKL02(5)  &lt;2&gt;</Item>
            </ItemList>
          </Panel>
          <Panel>
            <PanelHead>
              <PanelTab type="button" $active>属性列表</PanelTab><PanelTab type="button">图层管理</PanelTab><Close />
            </PanelHead>
            <PropBody>
              <PropForm>
                <PropSection>基础属性</PropSection>
                {PROPS.map(([label, value, tone]) => (
                  <PropRow key={label} $tone={tone}><span>{label}</span><input defaultValue={value} /></PropRow>
                ))}
              </PropForm>
              <Thumb $h={151} $top={14} $left={10} $right={6} />
            </PropBody>
          </Panel>
        </LeftColumn>

        <Center>
          <View>
            <Drawing />
            <ViewTools>
              <button type="button" aria-label="动态观察"><Icon name="orbit" size={26} /></button>
              <button type="button" aria-label="三维"><Icon name="cube3d" size={26} /><b>3D</b></button>
              <button type="button" aria-label="俯视"><Icon name="cubeTop" size={26} /></button>
              <Caret />
              <button type="button" aria-label="实体"><Icon name="cubeFull" size={26} /></button>
            </ViewTools>
            <Handle type="button" aria-label="收起左侧" $side="left"><Arrow d="M9 2L5 7l4 5" /></Handle>
            <Handle type="button" aria-label="收起右侧" $side="right"><Arrow d="M5 2l4 5-4 5" /></Handle>
            <Handle type="button" aria-label="收起下方" $side="bottom"><Arrow d="M2 5l5 5 5-5" /></Handle>
          </View>
          <Panel>
            <PanelHead><Grip />梁平法表格<Close /></PanelHead>
            <SpanTools>
              {["复制跨数据", "粘贴跨数据", "输入当前列数据", "删除当前列数据", "页面设置", "调换起始跨", "悬臂钢筋代号"].map((t, i) => (
                <button key={t} type="button" disabled={i === 1}>{t}</button>
              ))}
            </SpanTools>
            <SpanScroll>
              <SpanTable>
                <colgroup>{SPAN_COLS.map((w, i) => <col key={i} style={{ width: w }} />)}</colgroup>
                <thead>
                  <tr>
                    <th rowSpan={2} /><th rowSpan={2}>位置</th><th rowSpan={2}>名称</th><th rowSpan={2}>跨号</th>
                    <th colSpan={2}>标高</th><th colSpan={7}>构件尺寸(mm)</th>
                  </tr>
                  <tr>{["起点标高", "终点标高", "A1", "A2", "A3", "A4", "跨长", "截面(B*H)", "距左边线距离"].map((t) => <th key={t}>{t}</th>)}</tr>
                </thead>
                <tbody>
                  {SPANS.map((row, i) => (
                    <tr key={i}>
                      <th scope="row">{i + 1}</th>
                      {i === 0 && <td className="merged" rowSpan={9}>{"<1+400,\nF-300;10-\n400,F-30\n0>"}</td>}
                      {i === 0 && <td className="merged" rowSpan={9}>{"WKL01(7\n)"}</td>}
                      <td>{i + 1}</td><td>15.35</td><td>15.35</td>
                      {row.map((v, j) => <td key={j}>{v}</td>)}
                      <td>(400*600)</td><td>(200)</td>
                    </tr>
                  ))}
                </tbody>
              </SpanTable>
            </SpanScroll>
          </Panel>
        </Center>

        <RightPanel>
          <PanelHead $right={8}><Grip />显示设置<Close /></PanelHead>
          <SubTabs><SubTab type="button" $active>图元显示</SubTab><SubTab type="button">楼层显示</SubTab></SubTabs>
          <TreeWrap>
            <TreeTable>
              <colgroup><col style={{ width: 168 }} /><col style={{ width: 78 }} /><col style={{ width: 79 }} /></colgroup>
              <thead><tr><th>图层构件</th><th>显示图元</th><th>显示名称</th></tr></thead>
              <tbody>
                {TREE.map(([level, name, shown, label], i) => (
                  <tr key={i}>
                    <td>
                      <NameCell $level={level} $last={level === 2 && (!TREE[i + 1] || TREE[i + 1][0] < 2)}>
                        {level < 2 && <Fold type="button" aria-label={"折叠" + name} />}{name}
                      </NameCell>
                    </td>
                    <td><Check state={shown} aria-label={name + " 显示图元"} /></td>
                    <td><Check state={label} aria-label={name + " 显示名称"} /></td>
                  </tr>
                ))}
              </tbody>
            </TreeTable>
            <Thumb $h={104} $top={17} $left={6} $right={4} />
          </TreeWrap>
        </RightPanel>
      </Main>

      <RedMark viewBox="0 0 140 16" fill="none" aria-hidden="true">
        <path d="M3 10h5Q12 8 20 7H136" stroke="#ff1e12" strokeWidth="3" strokeLinecap="round" />
      </RedMark>
      <Meter />
    </Shell>
  );
}
